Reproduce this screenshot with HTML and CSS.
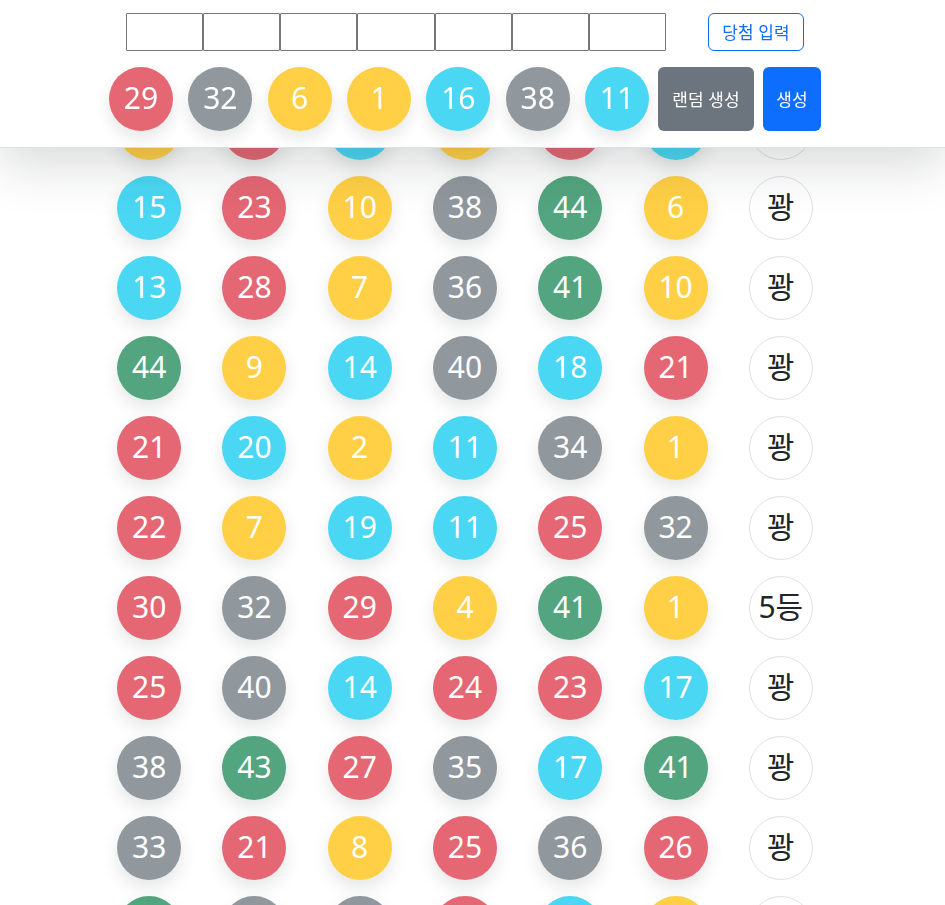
FILE: index.html
```html
<!DOCTYPE html>
<html lang="ko">
<head>
<meta charset="utf-8">
<meta name="viewport" content="width=device-width, initial-scale=1">
<title>로또</title>
<link rel="stylesheet" href="styles.css">
</head>
<body>
<header class="topbar">
  <form class="entry">
    <div class="entry-fields">
      <input type="text" inputmode="numeric" aria-label="번호 1">
      <input type="text" inputmode="numeric" aria-label="번호 2">
      <input type="text" inputmode="numeric" aria-label="번호 3">
      <input type="text" inputmode="numeric" aria-label="번호 4">
      <input type="text" inputmode="numeric" aria-label="번호 5">
      <input type="text" inputmode="numeric" aria-label="번호 6">
      <input type="text" inputmode="numeric" aria-label="번호 7">
    </div>
    <button type="button" class="btn btn-outline">당첨 입력</button>
  </form>
  <div class="winning">
    <div class="winning-balls">
      <span class="ball red">29</span>
      <span class="ball gray">32</span>
      <span class="ball yellow">6</span>
      <span class="ball yellow">1</span>
      <span class="ball cyan">16</span>
      <span class="ball gray">38</span>
      <span class="ball cyan">11</span>
    </div>
    <button type="button" class="btn btn-random">랜덤 생성</button>
    <button type="button" class="btn btn-create">생성</button>
  </div>
</header>
<main class="draws">
  <div class="draw"><span class="ball yellow"></span><span class="ball red"></span><span class="ball cyan"></span><span class="ball yellow"></span><span class="ball red"></span><span class="ball cyan"></span><span class="ball result"></span></div>
  <div class="draw"><span class="ball cyan">15</span><span class="ball red">23</span><span class="ball yellow">10</span><span class="ball gray">38</span><span class="ball green">44</span><span class="ball yellow">6</span><span class="ball result">꽝</span></div>
  <div class="draw"><span class="ball cyan">13</span><span class="ball red">28</span><span class="ball yellow">7</span><span class="ball gray">36</span><span class="ball green">41</span><span class="ball yellow">10</span><span class="ball result">꽝</span></div>
  <div class="draw"><span class="ball green">44</span><span class="ball yellow">9</span><span class="ball cyan">14</span><span class="ball gray">40</span><span class="ball cyan">18</span><span class="ball red">21</span><span class="ball result">꽝</span></div>
  <div class="draw"><span class="ball red">21</span><span class="ball cyan">20</span><span class="ball yellow">2</span><span class="ball cyan">11</span><span class="ball gray">34</span><span class="ball yellow">1</span><span class="ball result">꽝</span></div>
  <div class="draw"><span class="ball red">22</span><span class="ball yellow">7</span><span class="ball cyan">19</span><span class="ball cyan">11</span><span class="ball red">25</span><span class="ball gray">32</span><span class="ball result">꽝</span></div>
  <div class="draw"><span class="ball red">30</span><span class="ball gray">32</span><span class="ball red">29</span><span class="ball yellow">4</span><span class="ball green">41</span><span class="ball yellow">1</span><span class="ball result">5등</span></div>
  <div class="draw"><span class="ball red">25</span><span class="ball gray">40</span><span class="ball cyan">14</span><span class="ball red">24</span><span class="ball red">23</span><span class="ball cyan">17</span><span class="ball result">꽝</span></div>
  <div class="draw"><span class="ball gray">38</span><span class="ball green">43</span><span class="ball red">27</span><span class="ball gray">35</span><span class="ball cyan">17</span><span class="ball green">41</span><span class="ball result">꽝</span></div>
  <div class="draw"><span class="ball gray">33</span><span class="ball red">21</span><span class="ball yellow">8</span><span class="ball red">25</span><span class="ball gray">36</span><span class="ball red">26</span><span class="ball result">꽝</span></div>
  <div class="draw"><span class="ball green"></span><span class="ball gray"></span><span class="ball gray"></span><span class="ball red"></span><span class="ball cyan"></span><span class="ball yellow"></span><span class="ball result"></span></div>
</main>
</body>
</html>
```
FILE: styles.css
```css
*,
*::before,
*::after {
  box-sizing: border-box;
}

body {
  margin: 0;
  background: #fff;
  color: #212529;
  font-family: "Noto Sans", "Noto Sans CJK KR", sans-serif;
  font-size: 16px;
  line-height: 24px;
}

.topbar {
  position: fixed;
  top: 0;
  left: 0;
  right: 0;
  z-index: 10;
  display: flex;
  flex-direction: column;
  gap: 16px;
  padding: 13px 15px 16px 0;
  background: #fff;
  border-bottom: 1px solid #dee2e6;
  box-shadow: 0 16px 48px rgba(33, 37, 41, 0.175);
}

.entry,
.winning {
  display: flex;
  justify-content: center;
}

.entry {
  gap: 42px;
}

.winning {
  gap: 9px;
}

.entry-fields,
.winning-balls {
  display: flex;
  flex: 0 1 540px;
  min-width: 0;
}

.winning-balls {
  justify-content: space-between;
}

.entry-fields input {
  flex: 1 1 0;
  min-width: 0;
  height: 38px;
  padding: 1px 2px;
  border: 1px solid #767676;
  border-radius: 1px;
  background: #fff;
  font: inherit;
}

.btn {
  min-width: 96px;
  padding: 6px 12px;
  border: 1px solid transparent;
  border-radius: 6px;
  color: #fff;
  font-family: "Noto Sans CJK KR", sans-serif;
  font-size: 17px;
  line-height: 24px;
  white-space: nowrap;
  cursor: pointer;
}

.btn-outline {
  border-color: #0d6efd;
  background: transparent;
  color: #0d6efd;
}

.btn-random {
  background: #6c757d;
}

.btn-create {
  min-width: 58px;
  background: #0d6efd;
}

.draws {
  display: flex;
  flex-direction: column;
  gap: 16px;
  height: 100vh;
  padding: 96px 15px 0 0;
  overflow: hidden;
}

.draw {
  display: grid;
  grid-template-columns: repeat(7, 1fr);
  justify-items: center;
  width: 100%;
  max-width: 737px;
  margin: 0 auto;
}

.ball {
  display: flex;
  flex: none;
  align-items: center;
  justify-content: center;
  width: 64px;
  height: 64px;
  padding-bottom: 2px;
  border-radius: 50%;
  color: #fff;
  font-size: 30px;
  line-height: 48px;
  opacity: 0.75;
  box-shadow: 0 8px 16px rgba(33, 37, 41, 0.15);
}

.red { background: #dc3545; }
.gray { background: #6c757d; }
.yellow { background: #ffc107; }
.cyan { background: #0dcaf0; }
.green { background: #198754; }

.result {
  border: 1px solid #dee2e6;
  color: #212529;
  opacity: 1;
  box-shadow: none;
}
```
